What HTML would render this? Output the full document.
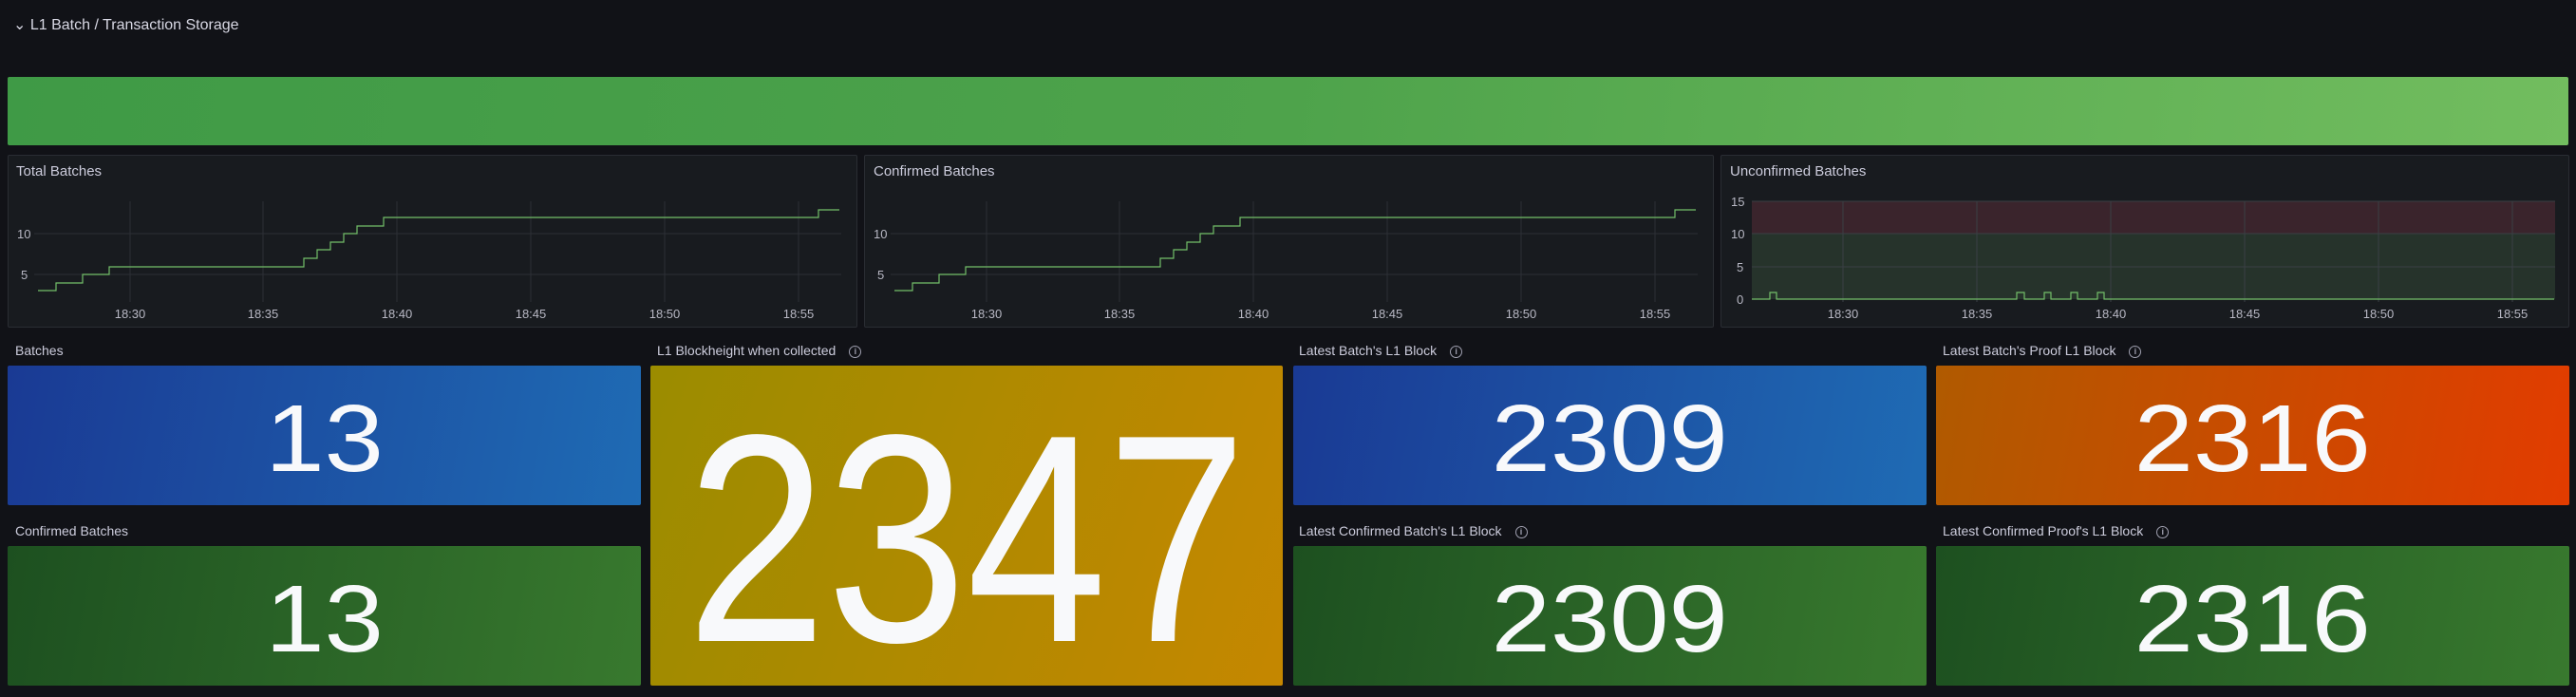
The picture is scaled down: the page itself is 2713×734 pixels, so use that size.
<!DOCTYPE html>
<html><head><meta charset="utf-8"><style>
*{margin:0;padding:0;box-sizing:border-box}
body{width:2713px;height:734px;background:#111217;position:relative;overflow:hidden;font-family:"Liberation Sans",sans-serif;color:#ccccdc}
.a{position:absolute}
.pn{position:absolute;background:#181b1f;border:1px solid #2a2d33;border-radius:2px}
.pt{position:absolute;font-size:15px;color:#ccccdc;white-space:nowrap}
.lb{position:absolute;font-size:14px;color:#ccccdc;white-space:nowrap}
.ic{display:inline-block;width:13px;height:13px;border:1.3px solid #a0a0b0;border-radius:50%;font-size:9px;line-height:11px;text-align:center;color:#a0a0b0;margin-left:14px;vertical-align:1px;font-weight:bold}
.bx{position:absolute;border-radius:2px;display:flex;align-items:center;justify-content:center;color:#f8f9fb;font-size:100px;line-height:1;overflow:hidden}
.bx span{display:inline-block;transform:translateY(3px) scaleX(1.12)}
</style></head><body>
<div class="a" style="left:14px;top:16px;font-size:16px;color:#d8d8e4">⌄ L1 Batch / Transaction Storage</div>
<div class="a" style="left:8px;top:81px;width:2697px;height:72px;border-radius:2px;background:linear-gradient(100deg,#3f9a46,#4ea34b 50%,#72bd5f)"></div>

<div class="pn" style="left:8px;top:163px;width:895px;height:182px"></div>
<div class="pn" style="left:910px;top:163px;width:895px;height:182px"></div>
<div class="pn" style="left:1812px;top:163px;width:894px;height:182px"></div>
<div class="pt" style="left:17px;top:172px">Total Batches</div>
<div class="pt" style="left:920px;top:172px">Confirmed Batches</div>
<div class="pt" style="left:1822px;top:172px">Unconfirmed Batches</div>

<svg class="a" style="left:0;top:0" width="2713" height="734" font-family="Liberation Sans" font-size="13" fill="#b8b8c4">
<g id="c1">
<g stroke="#2c2f35" stroke-width="1">
<line x1="137" y1="212" x2="137" y2="318"/><line x1="277" y1="212" x2="277" y2="318"/><line x1="418" y1="212" x2="418" y2="318"/><line x1="559" y1="212" x2="559" y2="318"/><line x1="700" y1="212" x2="700" y2="318"/><line x1="841" y1="212" x2="841" y2="318"/>
<line x1="36" y1="246" x2="886" y2="246"/><line x1="36" y1="289" x2="886" y2="289"/>
</g>
<text x="18" y="251">10</text><text x="22" y="294">5</text>
<text x="137" y="335" text-anchor="middle">18:30</text><text x="277" y="335" text-anchor="middle">18:35</text><text x="418" y="335" text-anchor="middle">18:40</text><text x="559" y="335" text-anchor="middle">18:45</text><text x="700" y="335" text-anchor="middle">18:50</text><text x="841" y="335" text-anchor="middle">18:55</text>
<path d="M40 306H59V298H87V289H115V281H320V272H334V263H348V255H362V246H376V238H404V229H862V221H884" fill="none" stroke="#73bf69" stroke-width="1.2"/>
</g>
<use href="#c1" x="902"/>
<rect x="1845" y="212" width="846" height="34" fill="#3a242c"/>
<rect x="1845" y="246" width="846" height="69" fill="#26332b"/>
<g stroke="#3a3f44" stroke-width="1">
<line x1="1941" y1="212" x2="1941" y2="318"/><line x1="2082" y1="212" x2="2082" y2="318"/><line x1="2223" y1="212" x2="2223" y2="318"/><line x1="2364" y1="212" x2="2364" y2="318"/><line x1="2505" y1="212" x2="2505" y2="318"/><line x1="2646" y1="212" x2="2646" y2="318"/>
<line x1="1845" y1="212" x2="2691" y2="212"/><line x1="1845" y1="246" x2="2691" y2="246"/><line x1="1845" y1="281" x2="2691" y2="281"/>
</g>
<text x="1823" y="217">15</text><text x="1823" y="251">10</text><text x="1829" y="286">5</text><text x="1829" y="320">0</text>
<text x="1941" y="335" text-anchor="middle">18:30</text><text x="2082" y="335" text-anchor="middle">18:35</text><text x="2223" y="335" text-anchor="middle">18:40</text><text x="2364" y="335" text-anchor="middle">18:45</text><text x="2505" y="335" text-anchor="middle">18:50</text><text x="2646" y="335" text-anchor="middle">18:55</text>
<path d="M1845 315H1864V308H1871V315H2124V308H2132V315H2153V308H2160V315H2181V308H2188V315H2209V308H2216V315H2690" fill="none" stroke="#73bf69" stroke-width="1.2"/>
</svg>

<div class="lb" style="left:16px;top:361px">Batches</div>
<div class="lb" style="left:692px;top:361px">L1 Blockheight when collected<span class="ic">i</span></div>
<div class="lb" style="left:1368px;top:361px">Latest Batch's L1 Block<span class="ic">i</span></div>
<div class="lb" style="left:2046px;top:361px">Latest Batch's Proof L1 Block<span class="ic">i</span></div>
<div class="lb" style="left:16px;top:551px">Confirmed Batches</div>
<div class="lb" style="left:1368px;top:551px">Latest Confirmed Batch's L1 Block<span class="ic">i</span></div>
<div class="lb" style="left:2046px;top:551px">Latest Confirmed Proof's L1 Block<span class="ic">i</span></div>

<div class="bx" style="left:8px;top:385px;width:667px;height:147px;background:linear-gradient(100deg,#1a3a94,#1f6bb4)"><span>13</span></div>
<div class="bx" style="left:685px;top:385px;width:666px;height:337px;background:linear-gradient(110deg,#9b8c00,#c58700)"><span style="font-size:312px;transform:translateY(14px) scaleX(0.85)">2347</span></div>
<div class="bx" style="left:1362px;top:385px;width:667px;height:147px;background:linear-gradient(100deg,#1a3a94,#1f6bb4)"><span>2309</span></div>
<div class="bx" style="left:2039px;top:385px;width:667px;height:147px;background:linear-gradient(100deg,#b05a00,#e23c00)"><span>2316</span></div>
<div class="bx" style="left:8px;top:575px;width:667px;height:147px;background:linear-gradient(100deg,#1d5020,#38792e)"><span>13</span></div>
<div class="bx" style="left:1362px;top:575px;width:667px;height:147px;background:linear-gradient(100deg,#1d5020,#38792e)"><span>2309</span></div>
<div class="bx" style="left:2039px;top:575px;width:667px;height:147px;background:linear-gradient(100deg,#1d5020,#38792e)"><span>2316</span></div>
</body></html>
